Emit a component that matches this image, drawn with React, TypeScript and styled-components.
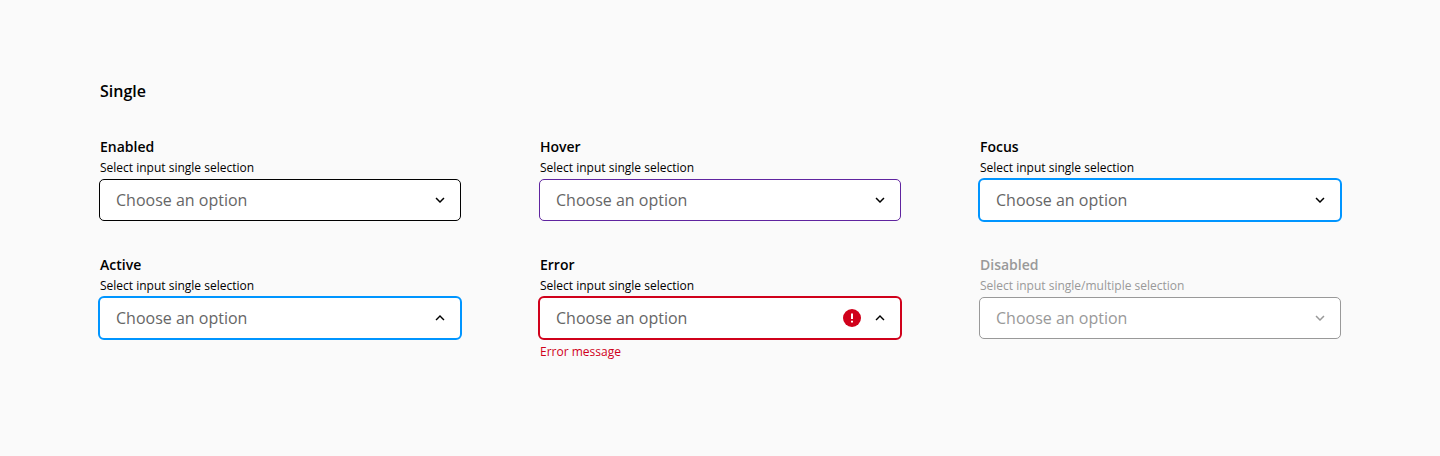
import React from "react";
import styled, { createGlobalStyle } from "styled-components";

type State = "enabled" | "hover" | "focus" | "active" | "error" | "disabled";

const borders: Record<State, { color: string; width: number }> = {
  enabled: { color: "#000000", width: 1 },
  hover: { color: "#5f249f", width: 1 },
  focus: { color: "#0095ff", width: 2 },
  active: { color: "#0095ff", width: 2 },
  error: { color: "#d0011b", width: 2 },
  disabled: { color: "#999999", width: 1 },
};

const GlobalStyle = createGlobalStyle`
  * { box-sizing: border-box; }
  body {
    margin: 0;
    background: #fafafa;
    color: #000;
    font-family: "Open Sans", sans-serif;
  }
`;

const Page = styled.main`
  min-height: 456px;
  padding: 79px 99px 0;
`;

const Title = styled.h1`
  margin: 0 0 32px 1px;
  font-size: 16px;
  line-height: 24px;
  font-weight: 600;
`;

const Grid = styled.div`
  display: grid;
  grid-template-columns: repeat(3, 362px);
  column-gap: 78px;
  row-gap: 32px;
  align-items: start;
`;

const Field = styled.div<{ $disabled: boolean }>`
  display: flex;
  flex-direction: column;
  height: 86px;
  color: ${(p) => (p.$disabled ? "#999999" : "#000000")};
`;

const Label = styled.span`
  margin-left: 1px;
  font-size: 14px;
  line-height: 24px;
  font-weight: 600;
`;

const Helper = styled.span`
  margin-left: 1px;
  font-size: 12px;
  line-height: 18px;
`;

/* A thick border grows outwards by one pixel, so the content never shifts. */
const Control = styled.div<{ $color: string; $width: number }>`
  display: flex;
  align-items: center;
  flex: none;
  height: ${(p) => 40 + 2 * p.$width}px;
  margin: ${(p) => 3 - p.$width}px ${(p) => 1 - p.$width}px ${(p) => 1 - p.$width}px;
  padding: 0 11px 0 16px;
  border: ${(p) => p.$width}px solid ${(p) => p.$color};
  border-radius: ${(p) => 4 + p.$width}px;
  background: #fff;
`;

const Placeholder = styled.span<{ $disabled: boolean }>`
  flex: 1;
  font-size: 16px;
  line-height: 24px;
  color: ${(p) => (p.$disabled ? "#999999" : "#666666")};
`;

const ErrorBadge = styled.svg`
  display: block;
  margin-right: 10px;
`;

const ErrorMessage = styled.span`
  margin: 4px 0 0 1px;
  font-size: 12px;
  line-height: 18px;
  color: #d0011b;
`;

const Chevron = ({ up }: { up: boolean }) => (
  <svg width="18" height="18" viewBox="0 0 24 24" fill="currentColor">
    <path
      d={
        up
          ? "M12 8l-6 6 1.41 1.41L12 10.83l4.59 4.58L18 14z"
          : "M16.59 8.59L12 13.17 7.41 8.59 6 10l6 6 6-6z"
      }
    />
  </svg>
);

const ErrorIcon = () => (
  <ErrorBadge width="18" height="18" viewBox="0 0 18 18">
    <circle cx="9" cy="9" r="9" fill="#d0011b" />
    <path d="M8 4.5h2v5.4H8zM8 11.7h2v1.8H8z" fill="#fff" />
  </ErrorBadge>
);

interface SelectProps {
  label: string;
  state: State;
  helper?: string;
  open?: boolean;
  error?: string;
}

const Select = ({
  label,
  state,
  helper = "Select input single selection",
  open = false,
  error,
}: SelectProps) => (
  <Field $disabled={state === "disabled"}>
    <Label>{label}</Label>
    <Helper>{helper}</Helper>
    <Control $color={borders[state].color} $width={borders[state].width}>
      <Placeholder $disabled={state === "disabled"}>Choose an option</Placeholder>
      {error && <ErrorIcon />}
      <Chevron up={open} />
    </Control>
    {error && <ErrorMessage>{error}</ErrorMessage>}
  </Field>
);

export default function App() {
  return (
    <>
      <GlobalStyle />
      <Page>
        <Title>Single</Title>
        <Grid>
          <Select label="Enabled" state="enabled" />
          <Select label="Hover" state="hover" />
          <Select label="Focus" state="focus" />
          <Select label="Active" state="active" open />
          <Select label="Error" state="error" open error="Error message" />
          <Select
            label="Disabled"
            state="disabled"
            helper="Select input single/multiple selection"
          />
        </Grid>
      </Page>
    </>
  );
}
